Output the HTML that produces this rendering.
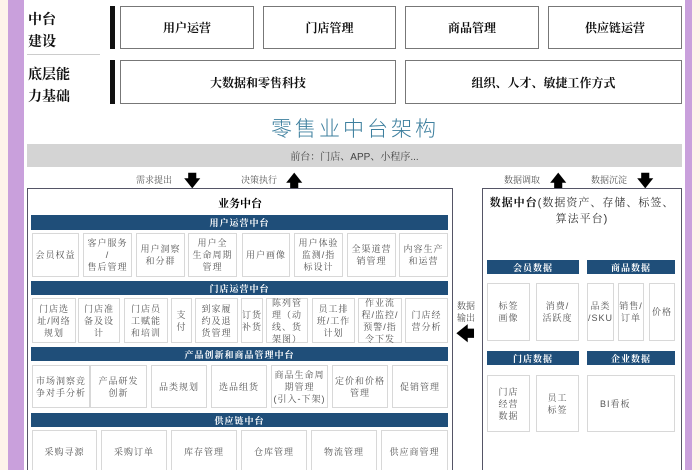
<!DOCTYPE html>
<html><head><meta charset="utf-8"><style>
*{margin:0;padding:0;box-sizing:border-box}
html,body{width:700px;height:470px;overflow:hidden}
body{background:#fdf3ea;position:relative;font-family:"Liberation Sans","Noto Serif CJK SC","Noto Sans CJK SC",serif}
.a{position:absolute}
.c{display:flex;align-items:center;justify-content:center;text-align:center}
.tb{border:1.5px solid #777;background:#fff;font-size:12px;font-weight:bold;color:#111}
.bar{background:#1f4e79;color:#fff;font-size:9px;font-weight:bold;letter-spacing:1px}
.it{border:1px solid #d8d8d8;background:#fff;font-size:9px;color:#555;line-height:12px;letter-spacing:1px}
.lbl{font-size:14px;font-weight:bold;color:#111;line-height:22px}
.sm{font-size:9px;color:#555}
</style></head><body>
<div class="a" style="left:8px;top:0;width:16px;height:470px;background:#c9a0dc"></div>
<div class="a" style="left:24px;top:0;width:661px;height:470px;background:#fff"></div>
<div class="a" style="left:685px;top:0;width:7px;height:470px;background:#c9a0dc"></div>

<div class="a lbl" style="left:28px;top:8px">中台<br>建设</div>
<div class="a" style="left:27px;top:54px;width:73px;height:1px;background:#ccc"></div>
<div class="a lbl" style="left:28px;top:63px">底层能<br>力基础</div>
<div class="a" style="left:110px;top:6px;width:5px;height:43px;background:#111"></div>
<div class="a" style="left:110px;top:60px;width:5px;height:44px;background:#111"></div>
<div class="a c tb" style="left:120px;top:6px;width:134px;height:43px">用户运营</div>
<div class="a c tb" style="left:263px;top:6px;width:133px;height:43px">门店管理</div>
<div class="a c tb" style="left:405px;top:6px;width:134px;height:43px">商品管理</div>
<div class="a c tb" style="left:548px;top:6px;width:134px;height:43px">供应链运营</div>
<div class="a c tb" style="left:120px;top:60px;width:276px;height:44px">大数据和零售科技</div>
<div class="a c tb" style="left:405px;top:60px;width:277px;height:44px">组织、人才、敏捷工作方式</div>

<div class="a c" style="left:200px;top:114px;width:310px;height:28px;font-size:21px;color:#3d7f9e;letter-spacing:3px;font-family:'Noto Sans CJK SC',sans-serif;font-weight:300">零售业中台架构</div>
<div class="a c" style="left:27px;top:144px;width:655px;height:23px;background:#d4d4d4;font-size:10px;color:#444">前台：门店、APP、小程序...</div>

<div class="a sm" style="left:136px;top:173px">需求提出</div>
<div class="a" style="left:184px;top:170px;font-size:16px;font-weight:bold">&#129095;</div>
<div class="a sm" style="left:241px;top:173px">决策执行</div>
<div class="a" style="left:286px;top:170px;font-size:16px;font-weight:bold">&#129093;</div>
<div class="a sm" style="left:504px;top:173px">数据调取</div>
<div class="a" style="left:550px;top:170px;font-size:16px;font-weight:bold">&#129093;</div>
<div class="a sm" style="left:591px;top:173px">数据沉淀</div>
<div class="a" style="left:637px;top:170px;font-size:16px;font-weight:bold">&#129095;</div>

<div class="a" style="left:27px;top:188px;width:426px;height:290px;border:1.5px solid #556;background:#fff"></div>
<div class="a c" style="left:27px;top:195px;width:426px;height:16px;font-size:11px;font-weight:bold">业务中台</div>
<div class="a c bar" style="left:31px;top:215px;width:417px;height:15px">用户运营中台</div>
<div class="a c it" style="left:32px;top:233px;width:47px;height:44px">会员权益</div>
<div class="a c it" style="left:83px;top:233px;width:49px;height:44px">客户服务<br>/<br>售后管理</div>
<div class="a c it" style="left:136px;top:233px;width:49px;height:44px">用户洞察<br>和分群</div>
<div class="a c it" style="left:188px;top:233px;width:49px;height:44px">用户全<br>生命周期<br>管理</div>
<div class="a c it" style="left:242px;top:233px;width:48px;height:44px">用户画像</div>
<div class="a c it" style="left:294px;top:233px;width:49px;height:44px">用户体验<br>监测/指<br>标设计</div>
<div class="a c it" style="left:347px;top:233px;width:49px;height:44px">全渠道营<br>销管理</div>
<div class="a c it" style="left:399px;top:233px;width:49px;height:44px">内容生产<br>和运营</div>

<div class="a c bar" style="left:31px;top:281px;width:417px;height:14px">门店运营中台</div>
<div class="a c it" style="left:32px;top:298px;width:44px;height:45px">门店选<br>址/网络<br>规划</div>
<div class="a c it" style="left:78px;top:298px;width:42px;height:45px">门店准<br>备及设<br>计</div>
<div class="a c it" style="left:124px;top:298px;width:44px;height:45px">门店员<br>工赋能<br>和培训</div>
<div class="a c it" style="left:171px;top:298px;width:21px;height:45px">支付</div>
<div class="a c it" style="left:195px;top:298px;width:43px;height:45px">到家履<br>约及退<br>货管理</div>
<div class="a c it" style="left:241px;top:298px;width:22px;height:45px">订货<br>补货</div>
<div class="a c it" style="left:266px;top:298px;width:42px;height:45px">陈列管<br>理（动<br>线、货<br>架图）</div>
<div class="a c it" style="left:312px;top:298px;width:43px;height:45px">员工排<br>班/工作<br>计划</div>
<div class="a c it" style="left:358px;top:298px;width:44px;height:45px">作业流<br>程/监控/<br>预警/指<br>令下发</div>
<div class="a c it" style="left:405px;top:298px;width:43px;height:45px">门店经<br>营分析</div>

<div class="a c bar" style="left:31px;top:347px;width:417px;height:14px">产品创新和商品管理中台</div>
<div class="a c it" style="left:32px;top:365px;width:58px;height:43px">市场洞察竞<br>争对手分析</div>
<div class="a c it" style="left:90px;top:365px;width:57px;height:43px">产品研发<br>创新</div>
<div class="a c it" style="left:151px;top:365px;width:56px;height:43px">品类规划</div>
<div class="a c it" style="left:211px;top:365px;width:56px;height:43px">选品组货</div>
<div class="a c it" style="left:271px;top:365px;width:57px;height:43px">商品生命周<br>期管理<br>(引入-下架)</div>
<div class="a c it" style="left:332px;top:365px;width:56px;height:43px">定价和价格<br>管理</div>
<div class="a c it" style="left:392px;top:365px;width:56px;height:43px">促销管理</div>

<div class="a c bar" style="left:31px;top:413px;width:417px;height:14px">供应链中台</div>
<div class="a c it" style="left:32px;top:430px;width:65px;height:44px">采购寻源</div>
<div class="a c it" style="left:101px;top:430px;width:66px;height:44px">采购订单</div>
<div class="a c it" style="left:171px;top:430px;width:66px;height:44px">库存管理</div>
<div class="a c it" style="left:241px;top:430px;width:66px;height:44px">仓库管理</div>
<div class="a c it" style="left:311px;top:430px;width:66px;height:44px">物流管理</div>
<div class="a c it" style="left:381px;top:430px;width:67px;height:44px">供应商管理</div>

<div class="a sm" style="left:457px;top:300px;line-height:12px">数据<br>输出</div>
<div class="a" style="left:456px;top:324px;font-size:18px;font-weight:bold;line-height:20px">&#129092;</div>

<div class="a" style="left:482px;top:188px;width:200px;height:290px;border:1.5px solid #556;background:#fff"></div>
<div class="a" style="left:488px;top:195px;width:188px;text-align:center;font-size:11px;line-height:16px;color:#333;letter-spacing:1px"><b style="color:#111">数据中台</b>(数据资产、存储、标签、算法平台)</div>
<div class="a c bar" style="left:487px;top:260px;width:92px;height:14px">会员数据</div>
<div class="a c bar" style="left:587px;top:260px;width:88px;height:14px">商品数据</div>
<div class="a c it" style="left:487px;top:283px;width:43px;height:58px">标签<br>画像</div>
<div class="a c it" style="left:536px;top:283px;width:43px;height:58px">消费/<br>活跃度</div>
<div class="a c it" style="left:587px;top:283px;width:27px;height:58px">品类<br>/SKU</div>
<div class="a c it" style="left:618px;top:283px;width:26px;height:58px">销售/<br>订单</div>
<div class="a c it" style="left:649px;top:283px;width:26px;height:58px">价格</div>
<div class="a c bar" style="left:487px;top:351px;width:92px;height:14px">门店数据</div>
<div class="a c bar" style="left:587px;top:351px;width:88px;height:14px">企业数据</div>
<div class="a c it" style="left:487px;top:375px;width:43px;height:57px">门店<br>经营<br>数据</div>
<div class="a c it" style="left:536px;top:375px;width:43px;height:57px">员工<br>标签</div>
<div class="a it" style="left:587px;top:375px;width:88px;height:57px;padding:22px 0 0 12px">BI看板</div>
</body></html>
